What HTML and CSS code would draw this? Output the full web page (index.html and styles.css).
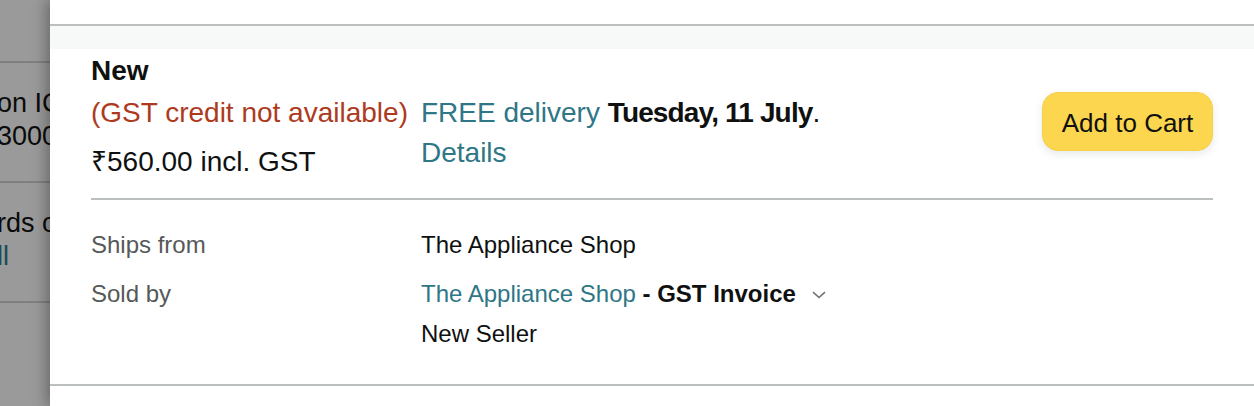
FILE: index.html
```html
<!DOCTYPE html>
<html lang="en">
<head>
  <meta charset="UTF-8">
  <meta name="viewport" content="width=device-width, initial-scale=1.0">
  <title>Other sellers</title>
  <link rel="stylesheet" href="styles.css">
</head>
<body>
  <div class="page">
    <!-- page behind the drawer, dimmed -->
    <div class="backdrop">
      <div class="bd-row bd-top"></div>
      <div class="bd-row bd-mid">
        <span>on ICICI</span>
        <span>3000</span>
      </div>
      <div class="bd-row bd-mid">
        <span>rds on</span>
        <span class="bd-link">ll</span>
      </div>
      <div class="bd-row bd-low"></div>
    </div>

    <div class="drawer">
      <div class="drawer-head"></div>
      <div class="drawer-band"></div>

      <div class="offer">
        <div class="offer-main">
          <div class="condition">New</div>
          <div class="offer-cols">
            <div class="price-col">
              <div class="gst-note">(GST credit not available)</div>
              <div class="price">₹560.00 incl. GST</div>
            </div>
            <div class="delivery-col">
              <div><span class="link">FREE delivery</span> <b>Tuesday, 11 July</b>.</div>
              <div class="link">Details</div>
            </div>
          </div>
        </div>
        <button class="btn-cart">Add to Cart</button>
      </div>

      <div class="seller-info">
        <div class="info-row">
          <div class="info-label">Ships from</div>
          <div class="info-value">The Appliance Shop</div>
        </div>
        <div class="info-row">
          <div class="info-label">Sold by</div>
          <div class="info-value">
            <div class="sold-by">
              <span class="link">The Appliance Shop</span>
              <b>&nbsp;- GST Invoice</b>
              <svg class="chevron" width="14" height="8" viewBox="0 0 14 8">
                <path d="M1 1.2 L7 6.5 L13 1.2" fill="none" stroke="#6f7373" stroke-width="1.6"/>
              </svg>
            </div>
            <div>New Seller</div>
          </div>
        </div>
      </div>
    </div>
  </div>
</body>
</html>
```

FILE: styles.css
```css
* {
  box-sizing: border-box;
}
body {
  margin: 0;
  font-family: 'Liberation Sans', Arial, sans-serif;
  color: #0f1111;
  background-color: #fff;
}
.page {
  display: flex;
  height: 406px;
  overflow: hidden;
}

/* dimmed page on the left */
.backdrop {
  width: 50px;
  flex-shrink: 0;
  background-color: #9a9a9a;
  overflow: hidden;
  font-size: 27px;
  color: #0b0b0b;
  white-space: nowrap;
}
.bd-row {
  border-bottom: 2px solid #7f8080;
}
.bd-top {
  height: 63px;
}
.bd-mid {
  height: 120px;
  padding-top: 24px;
  line-height: 33px;
  margin-left: -3px;
}
.bd-mid span {
  display: block;
}
.bd-link {
  color: #1b4a55;
}
.bd-low {
  height: 203px;
}

/* drawer */
.drawer {
  flex: 1;
  position: relative;
  z-index: 1;
  background-color: #fff;
  box-shadow: -3px 0 14px rgba(0, 0, 0, 0.35);
}
.drawer-head {
  height: 26px;
  border-bottom: 2px solid #bcbfbf;
}
.drawer-band {
  height: 23px;
  background-color: #f7f8f8;
}
.link {
  color: #2f7686;
}

.offer {
  display: flex;
  align-items: flex-start;
  margin: 0 41px;
  padding-top: 2px;
  padding-bottom: 16px;
  border-bottom: 2px solid #bcbfbf;
  font-size: 28px;
  line-height: 40px;
}
.offer-main {
  flex: 1;
}
.condition {
  font-weight: bold;
}
.offer-cols {
  display: flex;
  margin-top: 2px;
}
.price-col {
  width: 330px;
}
.gst-note {
  color: #ae3a1e;
}
.price {
  margin-top: 9px;
}
.delivery-col b {
  letter-spacing: -0.85px;
}
.btn-cart {
  margin-top: 41px;
  width: 171px;
  height: 59px;
  padding: 0;
  font-family: inherit;
  font-size: 26px;
  line-height: 60px;
  color: #0f1111;
  background-color: #fbd64e;
  border: 1px solid #f6d04a;
  border-radius: 16px;
  box-shadow: 0 3px 8px rgba(213, 217, 217, 0.6);
  cursor: pointer;
}

.seller-info {
  padding-top: 25px;
  padding-left: 41px;
  height: 186px;
  border-bottom: 2px solid #bcbfbf;
  font-size: 24px;
  line-height: 40px;
}
.info-row {
  display: flex;
  margin-bottom: 9px;
}
.info-label {
  width: 330px;
  color: #565959;
}
.sold-by {
  display: flex;
  align-items: center;
}
.chevron {
  margin-left: 16px;
  margin-top: 2px;
}
```
